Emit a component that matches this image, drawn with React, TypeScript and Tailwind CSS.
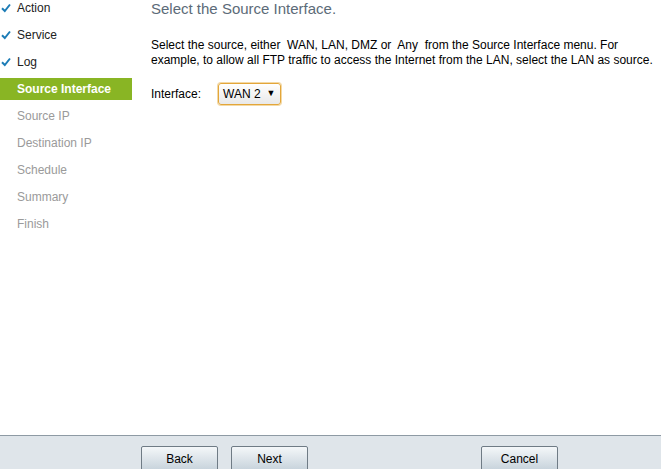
import React from 'react';

const steps = [
  { label: 'Action', done: true },
  { label: 'Service', done: true },
  { label: 'Log', done: true },
  { label: 'Source Interface', active: true },
  { label: 'Source IP' },
  { label: 'Destination IP' },
  { label: 'Schedule' },
  { label: 'Summary' },
  { label: 'Finish' },
];

const Check: React.FC = () => (
  <svg width="10" height="10" viewBox="0 0 10 10" className="absolute left-[1px] top-[6px]">
    <path d="M1 5.2 L3.8 8 L9 1.5" fill="none" stroke="#1c7cb6" strokeWidth="2" />
  </svg>
);

const WizardButton: React.FC<{ label: string }> = ({ label }) => (
  <button className="w-[77px] h-[26px] border border-[#6f7b85] rounded-[2px] bg-gradient-to-b from-[#f4f7f9] to-[#c5d1da] text-[12px] text-black">
    {label}
  </button>
);

export default function App() {
  return (
    <div
      className="w-[661px] h-[469px] bg-white flex flex-col overflow-hidden"
      style={{ fontFamily: '"Liberation Sans", Arial, sans-serif' }}
    >
      <div className="flex flex-1">
        <ul className="w-[132px] flex flex-col -mt-[3px]">
          {steps.map((s) => (
            <li
              key={s.label}
              className={`relative h-[22px] mb-[5px] pl-[17px] flex items-center text-[12px] ${
                s.active
                  ? 'bg-[#89b524] text-white font-bold'
                  : s.done
                  ? 'text-[#222]'
                  : 'text-[#9a9a9a]'
              }`}
            >
              {s.done && <Check />}
              {s.label}
            </li>
          ))}
        </ul>
        <div className="flex-1 pl-[19px] pt-0">
          <h1 className="text-[15px] text-[#5c6b78] leading-[17px] mt-0">Select the Source Interface.</h1>
          <p className="mt-[21px] text-[12px] leading-[15px] text-black">
            Select the source, either&nbsp; WAN, LAN, DMZ or&nbsp; Any&nbsp; from the Source Interface menu. For
            <br />
            example, to allow all FTP traffic to access the Internet from the LAN, select the LAN as source.
          </p>
          <div className="mt-[15px] flex items-center text-[12px]">
            <span className="w-[67px]">Interface:</span>
            <div className="h-[22px] w-[63px] border border-[#e3a63a] rounded-[3px] bg-gradient-to-b from-white to-[#e9e9e9] flex items-center pl-[4px] gap-[6px] shadow-[0_0_0_1px_#f3d9a6]">
              <span>WAN 2</span>
              <span className="text-[9px]">▼</span>
            </div>
          </div>
        </div>
      </div>
      <div className="h-[34px] border-t border-[#8e9aa4] bg-[#dfe5ea] flex pt-[10px]">
        <div className="ml-[141px] flex gap-[13px]">
          <WizardButton label="Back" />
          <WizardButton label="Next" />
        </div>
        <div className="ml-[173px]">
          <WizardButton label="Cancel" />
        </div>
      </div>
    </div>
  );
}
